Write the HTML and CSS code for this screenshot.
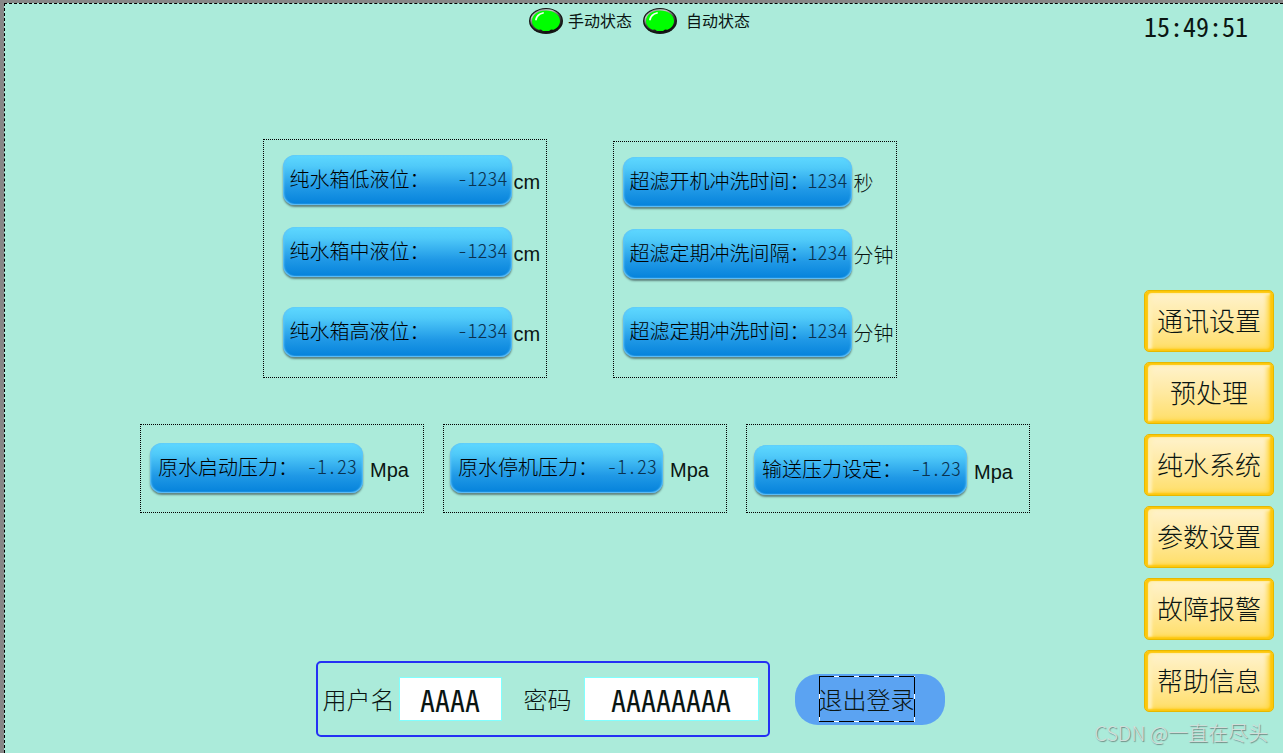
FILE: index.html
```html
<!DOCTYPE html>
<html lang="zh-CN">
<head>
<meta charset="utf-8">
<meta name="viewport" content="width=device-width, initial-scale=1">
<title>参数设置</title>
<link rel="stylesheet" href="styles.css">
</head>
<body>
<svg class="defs" width="0" height="0" aria-hidden="true">
  <defs>
    <linearGradient id="rim" x1="0" y1="0" x2="0.5" y2="1">
      <stop offset="0" stop-color="#5b6b66"/>
      <stop offset="0.3" stop-color="#c8c8c8"/>
      <stop offset="0.6" stop-color="#4a4a4a"/>
      <stop offset="1" stop-color="#101010"/>
    </linearGradient>
    <symbol id="lamp" viewBox="0 0 34 26">
      <ellipse cx="17" cy="13" rx="17" ry="13" fill="#151515"/>
      <ellipse cx="17" cy="12.7" rx="15.600" ry="11.600" fill="url(#rim)"/>
      <path d="M3 13C3 7 9 2.600 17 2.600S31 7 31 13c0 4-2.500 7-6.500 8.800l-2.500-.3-2 1.500h-6l-2-1.500-2.500.3C5.500 20 3 17 3 13z" fill="#00ff00"/>
      <path d="M7 11.500C7.600 8.500 10 6 14 5" fill="none" stroke="#f2fff2" stroke-width="1.800" stroke-linecap="round"/>
    </symbol>
  </defs>
</svg>
<div class="screen">
  <header class="topbar">
    <div class="states">
      <span class="state"><svg class="lamp" aria-hidden="true"><use href="#lamp"/></svg>手动状态</span>
      <span class="state auto"><svg class="lamp" aria-hidden="true"><use href="#lamp"/></svg>自动状态</span>
    </div>
    <time class="clock">15:49:51</time>
  </header>

  <div class="workspace">
    <main class="content">
      <div class="row levels">
        <section class="panel tank">
          <div class="setting"><label class="field"><span>纯水箱低液位：</span><input value="-1234"></label><span class="unit">cm</span></div>
          <div class="setting"><label class="field"><span>纯水箱中液位：</span><input value="-1234"></label><span class="unit">cm</span></div>
          <div class="setting last"><label class="field"><span>纯水箱高液位：</span><input value="-1234"></label><span class="unit">cm</span></div>
        </section>
        <section class="panel flush">
          <div class="setting"><label class="field"><span>超滤开机冲洗时间：</span><input value="1234"></label><span class="unit">秒</span></div>
          <div class="setting"><label class="field"><span>超滤定期冲洗间隔：</span><input value="1234"></label><span class="unit">分钟</span></div>
          <div class="setting last"><label class="field"><span>超滤定期冲洗时间：</span><input value="1234"></label><span class="unit">分钟</span></div>
        </section>
      </div>

      <div class="row pressures">
        <section class="panel pressure">
          <div class="setting"><label class="field"><span>原水启动压力：</span><input value="-1.23"></label><span class="unit">Mpa</span></div>
        </section>
        <section class="panel pressure stop">
          <div class="setting"><label class="field"><span>原水停机压力：</span><input value="-1.23"></label><span class="unit">Mpa</span></div>
        </section>
        <section class="panel pressure supply">
          <div class="setting"><label class="field"><span>输送压力设定：</span><input value="-1.23"></label><span class="unit">Mpa</span></div>
        </section>
      </div>

      <div class="row account">
        <form class="login">
          <label for="user">用户名</label>
          <input id="user" class="user" value="AAAA">
          <label for="pass" class="pass-label">密码</label>
          <input id="pass" class="pass" value="AAAAAAAA">
        </form>
        <button type="button" class="logout"><span>退出登录</span></button>
      </div>
    </main>

    <nav class="menu">
      <button type="button">通讯设置</button>
      <button type="button">预处理</button>
      <button type="button">纯水系统</button>
      <button type="button">参数设置</button>
      <button type="button">故障报警</button>
      <button type="button">帮助信息</button>
    </nav>
  </div>
  <div class="watermark">CSDN @一直在尽头</div>
</div>
</body>
</html>
```
FILE: styles.css
```css
* {
  box-sizing: border-box;
}

body {
  margin: 0;
  min-height: 100vh;
  display: flex;
  padding: 3px 0 0 4px;
  background: #878787;
  color: #0a1512;
  font-family: "Noto Sans CJK SC", sans-serif;
  font-weight: 300;
}

.defs {
  position: absolute;
}

input,
button {
  font-family: inherit;
  font-weight: inherit;
  color: inherit;
}

.screen {
  position: relative;
  flex: 1;
  display: flex;
  flex-direction: column;
  border-top: 1px dashed #000;
  border-left: 1px dashed #000;
  background: #abebda;
}

/* Top bar */
.topbar {
  display: grid;
  grid-template-columns: 1fr auto 1fr;
  padding: 4px 9px 0 0;
}

.states {
  grid-column: 2;
  display: flex;
  gap: 11px;
  height: 27px;
  font-size: 16px;
  font-weight: 400;
  line-height: 24px;
}

.state {
  display: flex;
  gap: 5px;
}

.state.auto {
  gap: 9px;
}

.lamp {
  width: 34px;
  height: 26px;
}

.clock {
  justify-self: end;
  margin-right: 26px;
  font-size: 26px;
  font-weight: 400;
  line-height: 36px;
  font-feature-settings: "hwid";
}

/* Work area */
.workspace {
  flex: 1;
  display: flex;
}

.content {
  flex: 1;
  display: flex;
  flex-direction: column;
  padding: 95px 0 16px;
}

.row {
  display: flex;
  justify-content: center;
}

.levels {
  gap: 66px;
  padding-left: 10px;
}

.pressures {
  gap: 19px;
  padding-left: 21px;
  margin-top: 46px;
}

.account {
  align-items: center;
  gap: 25px;
  padding-left: 111px;
  margin-top: auto;
}

.panel {
  width: 284px;
  border: 1px dotted #000;
}

.tank {
  padding: 15px 0 20px 19px;
}

.flush {
  margin-top: 2px;
  padding: 15px 0 20px 9px;
}

.pressure {
  padding: 18px 0 19px 9px;
}

.pressure.stop {
  padding-left: 6px;
}

.pressure.supply {
  padding-top: 20px;
  padding-bottom: 17px;
  padding-left: 7px;
}

.setting {
  display: flex;
  align-items: center;
  gap: 2px;
}

.setting + .setting {
  margin-top: 22px;
}

.tank .setting.last {
  margin-top: 30px;
}

.flush .setting.last {
  margin-top: 28px;
}

.pressure .setting {
  gap: 7px;
}

.field {
  display: flex;
  justify-content: space-between;
  align-items: center;
  width: 229px;
  height: 50px;
  padding: 0 4px 3px 7px;
  border-radius: 12px;
  background: linear-gradient(#5ed8ff 0%, #50caf9 22%, #2099e6 65%, #0784dc 96%);
  box-shadow: inset 1px 0 2px #62c4f5, inset -1px 0 2px #62c4f5, inset 0 -1px 1px #62b8f4, 0 2px 2px #5f8581;
  color: #000;
  font-size: 20px;
  line-height: 24px;
  white-space: nowrap;
}

.pressure .field {
  width: 213px;
  padding-left: 8px;
  padding-right: 6px;
}

.field span {
  flex: 0 1 auto;
  min-width: 0;
}

.field input {
  flex: none;
  width: 51px;
  height: 24px;
  padding: 0 0 2px;
  border: 0;
  background: none;
  color: #0a3250;
  font-size: 20px;
  font-feature-settings: "hwid";
  text-align: right;
}

.flush .field input {
  width: 41px;
}

.unit {
  padding-top: 3px;
  font-family: "Liberation Sans", "Noto Sans CJK SC", sans-serif;
  font-size: 20px;
  line-height: 24px;
}

/* Account */
.login {
  display: flex;
  align-items: center;
  height: 76px;
  padding: 0 9px 0 5px;
  border: 2px solid #2430f4;
  border-radius: 5px;
  font-size: 24px;
}

.login label {
  padding-bottom: 2px;
}

.login input {
  height: 44px;
  padding: 0;
  border: 1px solid #80ffff;
  background: #fff;
  font-size: 30px;
  font-weight: 400;
  font-feature-settings: "hwid";
  text-align: center;
}

.login .user {
  width: 103px;
  margin-left: 4px;
}

.login .pass {
  width: 175px;
  margin-left: 12px;
}

.login .pass-label {
  margin-left: 22px;
}

.logout {
  width: 150px;
  height: 51px;
  padding: 0 6px 0 0;
  border: 0;
  border-radius: 23px;
  background: #5ba3f2;
  font-size: 24px;
}

.logout span {
  display: inline-block;
  line-height: 46px;
  background:
    repeating-linear-gradient(90deg, #000 0 15px, #fff 15px 20px) top / 100% 1px no-repeat,
    repeating-linear-gradient(90deg, #000 0 15px, #fff 15px 20px) bottom / 100% 1px no-repeat,
    repeating-linear-gradient(#000 0 18px, #fff 18px 23px) left / 1px 100% no-repeat,
    repeating-linear-gradient(#000 0 18px, #fff 18px 23px) right / 1px 100% no-repeat;
}

/* Side menu */
.menu {
  align-self: flex-end;
  display: flex;
  flex-direction: column;
  gap: 10px;
  width: 130px;
  margin: 0 9px 41px 0;
}

.menu button {
  height: 62px;
  padding: 0 0 4px;
  border: 1px solid #e6b800;
  border-radius: 5px;
  background: linear-gradient(#fff3cf, #ffe9a0 50%, #ffde66);
  box-shadow: inset 3px 2px 1px #fdc70a, inset -3px -2px 2px #fdc70a, inset 7px 4px 3px #fff0b8, inset -6px -3px 4px #ffd84a;
  font-size: 26px;
}

.watermark {
  position: absolute;
  right: 15px;
  bottom: 6px;
  color: #d3deda;
  font-size: 20px;
  line-height: 28px;
  text-shadow: 1px 1px 1px #6f8a83;
}
```
